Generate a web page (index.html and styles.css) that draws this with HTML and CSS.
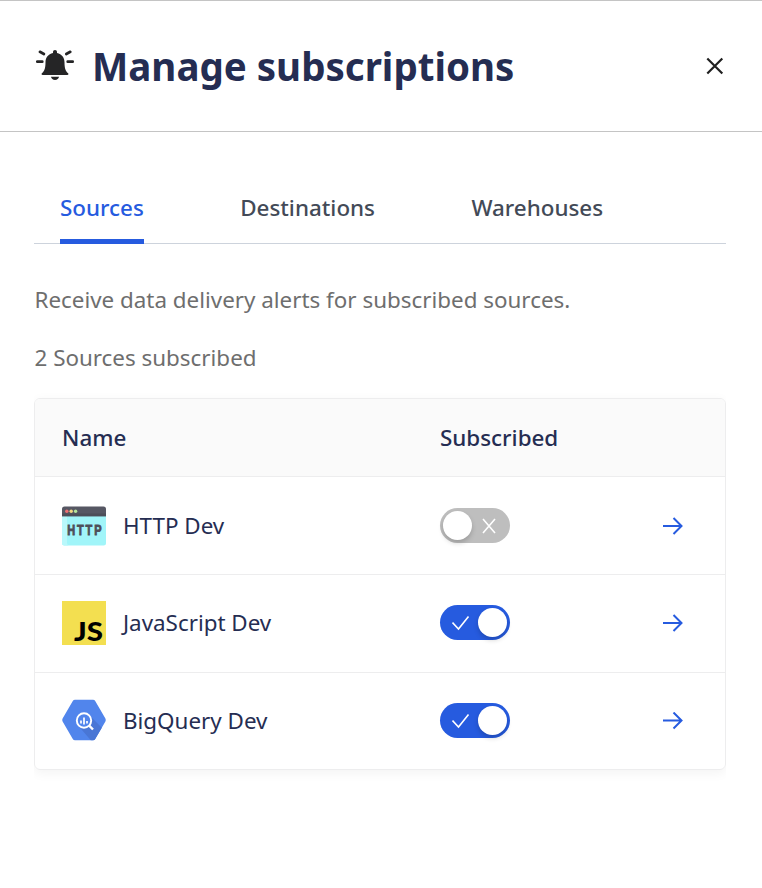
FILE: index.html
```html
<!DOCTYPE html>
<html lang="en">
<head>
<meta charset="utf-8">
<title>Manage subscriptions</title>
<link rel="stylesheet" href="styles.css">
</head>
<body>
<header class="header">
  <svg class="bell" width="40" height="34" viewBox="0 0 40 34" fill="#252526" aria-hidden="true">
    <path d="M20 1c1.200 0 2 .8 2 2v.9c4.800 1 7.500 4.700 7.500 9.300 0 6.200 1.100 8.800 3.600 11.100.7.800.3 1.700-.8 1.700H7.700c-1.100 0-1.500-.9-.8-1.700 2.500-2.300 3.600-4.900 3.600-11.100 0-4.600 2.700-8.300 7.500-9.300V3c0-1.200.8-2 2-2z"/>
    <path d="M16 27.800h8c-.3 2-1.800 3.200-4 3.200s-3.700-1.200-4-3.200z"/>
    <path d="M2.300 12.700h5M32.700 12.700h5M4.900 2.800l4 2.200M35.300 2.800l-4 2.200" fill="none" stroke="#252526" stroke-width="2.700" stroke-linecap="round"/>
  </svg>
  <h1 class="title">Manage subscriptions</h1>
  <button class="close" aria-label="Close">
    <svg width="18" height="18" viewBox="0 0 18 18" fill="none" stroke="#202020" stroke-width="2.200"><path d="M1.300 1.500l15 15M16.300 1.500l-15 15"/></svg>
  </button>
</header>
<main class="content">
  <nav class="tabs">
    <a class="tab active">Sources</a>
    <a class="tab">Destinations</a>
    <a class="tab">Warehouses</a>
  </nav>
  <p class="description">Receive data delivery alerts for subscribed sources.</p>
  <p class="count">2 Sources subscribed</p>
  <section class="card">
    <div class="row head"><span class="name-head">Name</span><span class="sub-head">Subscribed</span></div>
    <div class="row">
      <svg class="logo" width="44" height="44" viewBox="0 0 44 44">
        <path d="M0 12h44v27a2.500 2.500 0 0 1-2.500 2.500h-39A2.500 2.500 0 0 1 0 39z" fill="#a1f5f9"/>
        <path d="M0 12h5v24c0 3 0 5.500 2 5.500H2.500A2.500 2.500 0 0 1 0 39z" fill="#b9f8fb"/>
        <path d="M2.500 2.500h39A2.500 2.500 0 0 1 44 5v7.200H0V5a2.500 2.500 0 0 1 2.500-2.500z" fill="#565763"/>
        <path d="M0 9.500h44v2.700H0z" fill="#4d4e59"/>
        <circle cx="4.800" cy="7.300" r="1.700" fill="#ee6e72"/><circle cx="9.200" cy="7.300" r="1.700" fill="#f4d880"/><circle cx="13.600" cy="7.300" r="1.700" fill="#b6e59b"/>
        <text class="http-text" x="5.300" y="31" textLength="36" lengthAdjust="spacingAndGlyphs">HTTP</text>
      </svg>
      <span class="name">HTTP Dev</span>
      <span class="toggle"><span class="knob"></span><svg class="mark" width="14" height="16" viewBox="0 0 14 16"><path d="M1 1l12 14M13 1L1 15"/></svg></span>
      <svg class="arrow" width="22" height="18" viewBox="0 0 22 18"><path d="M1 9h19M11.500 1l8 8-8 8"/></svg>
    </div>
    <div class="row raised">
      <svg class="logo" width="44" height="44" viewBox="0 0 44 44">
        <path d="M0 0h44v44H0z" fill="#f3df50"/>
        <text class="js-text" x="12" y="39.700" textLength="29" lengthAdjust="spacingAndGlyphs">JS</text>
      </svg>
      <span class="name">JavaScript Dev</span>
      <span class="toggle on"><svg class="mark" width="18" height="16" viewBox="0 0 18 16"><path d="M.5 7.500l6 6.500L16.500 1.500"/></svg><span class="knob"></span></span>
      <svg class="arrow" width="22" height="18" viewBox="0 0 22 18"><path d="M1 9h19M11.500 1l8 8-8 8"/></svg>
    </div>
    <div class="row raised">
      <svg class="logo" width="44" height="44" viewBox="0 0 44 44">
        <path d="M13 .7h18q1.500 0 2.200 1.300l10.200 17.500q.8 1.500 0 3L33.200 40q-.7 1.200-2.200 1.200H13q-1.500 0-2.200-1.200L.6 22.500q-.8-1.500 0-3L10.800 2q.7-1.300 2.200-1.300z" fill="#5185ec"/>
        <path d="M27.500 16.300L39.800 28.700 33.200 40q-.7 1.200-2.200 1.200h-2.200L16.500 27z" fill="#4976d5"/>
        <circle cx="22" cy="21.500" r="7.200" fill="#5185ec" stroke="#fff" stroke-width="1.900"/>
        <path d="M27.200 26.700l3.800 3.800" stroke="#fff" stroke-width="2.400"/>
        <path d="M19 21.500v3M22 18.500v7M25 22v2.500" stroke="#fff" stroke-width="1.700"/>
      </svg>
      <span class="name">BigQuery Dev</span>
      <span class="toggle on"><svg class="mark" width="18" height="16" viewBox="0 0 18 16"><path d="M.5 7.500l6 6.500L16.500 1.500"/></svg><span class="knob"></span></span>
      <svg class="arrow" width="22" height="18" viewBox="0 0 22 18"><path d="M1 8.500h19M11.500 .5l8 8-8 8"/></svg>
    </div>
  </section>
</main>
</body>
</html>
```
FILE: styles.css
```css
* { box-sizing: border-box; }
body { margin: 0; height: 888px; background: #fff; color: #252d52; font-family: "Noto Sans", sans-serif; }
.header { display: flex; align-items: center; height: 132px; padding: 0 38px 0 35px; border-top: 1px solid #c4c4c4; border-bottom: 1px solid #c4c4c4; }
.bell { flex: none; margin-right: 17px; }
.title { margin: 0; font-size: 38.5px; line-height: 54px; font-weight: 700; white-space: nowrap; }
.close { display: flex; margin: 0 0 0 auto; padding: 0; border: 0; background: none; }
.content { padding: 45px 36px 0 34px; }
.tabs { display: flex; gap: 96.4px; height: 67px; padding-left: 26px; border-bottom: 1px solid #cdd3dc; }
.tab { height: 67px; line-height: 62px; font-size: 22.4px; font-weight: 500; color: #434a57; }
.tab.active { color: #265bdf; border-bottom: 5px solid #265bdf; }
.description, .count { margin: 0; font-size: 22.4px; line-height: 30px; color: #6e6e6e; }
.description { margin-top: 41px; padding-left: .5px; }
.count { margin-top: 28px; padding-left: .5px; }
.card { margin-top: 25px; height: 372px; border: 1px solid #ededee; border-radius: 6px; overflow: hidden; box-shadow: 0 3px 12px rgba(0, 0, 0, .05); clip-path: inset(-20px 0); }
.row { display: flex; align-items: center; height: 98px; padding: 0 41px 0 27px; border-top: 1px solid #ededee; font-size: 22.4px; }
.row.head { height: 77px; border: 0; background: #fafafa; font-weight: 500; }
.row.raised { padding-bottom: 2px; }
.name-head, .sub-head { line-height: 30px; }
.name-head { width: 378px; }
.logo { flex: none; margin-right: 17px; overflow: visible; }
.name { width: 317px; line-height: 30px; }
.toggle { display: flex; align-items: center; justify-content: space-between; width: 70px; height: 35px; padding: 0 14px 0 3px; border-radius: 18px; background: #bebebe; }
.toggle.on { padding: 0 3px 0 12px; background: #265bdf; }
.knob { width: 29px; height: 29px; border-radius: 50%; background: #fff; box-shadow: 0 3px 5px rgba(0, 0, 0, .18); }
.mark { fill: none; stroke: #fff; stroke-width: 1.6; }
.arrow { margin-left: auto; fill: none; stroke: #265bdf; stroke-width: 2; stroke-linejoin: miter; }
.http-text { font: 700 15px "Liberation Sans", sans-serif; letter-spacing: 2.5px; fill: #4d4e59; stroke: #4d4e59; stroke-width: .9; }
.js-text { font: 900 27px Lato, sans-serif; fill: #000; }
```
